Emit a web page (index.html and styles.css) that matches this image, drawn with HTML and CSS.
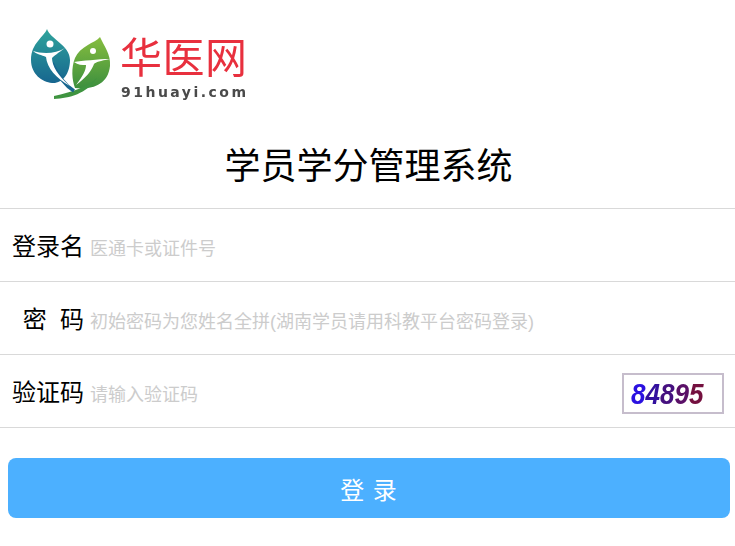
FILE: index.html
```html
<!DOCTYPE html>
<html lang="zh-CN">
<head>
    <meta charset="UTF-8">
    <meta name="viewport" content="width=device-width, initial-scale=1.0">
    <title>学员学分管理系统</title>
    <link rel="stylesheet" href="styles.css">
</head>
<body>
    <div class="logo">
        <svg width="280" height="110" viewBox="0 0 280 110">
            <defs>
                <linearGradient id="teal" x1="0" y1="0" x2="0" y2="1">
                    <stop offset="0" stop-color="#2fa49c"/>
                    <stop offset="1" stop-color="#17668f"/>
                </linearGradient>
                <linearGradient id="green" x1="0" y1="0" x2="0" y2="1">
                    <stop offset="0" stop-color="#86bd3f"/>
                    <stop offset="1" stop-color="#3c8f3e"/>
                </linearGradient>
            </defs>
            <path d="M47 19 C44 27 31 33 31 50 C31 64 42 72 52 73 C62 74 70 64 70 50 C70 35 50 29 47 19Z" fill="url(#teal)"/>
            <path d="M100 27 C95 33 80 36 75 48 C71 58 72 70 75 78 C90 80 108 76 110 56 C111 44 104 36 100 27Z" fill="url(#green)"/>
            <path d="M54 89 C70 88 86 84 97 68 C87 77 72 82 54 86Z" fill="#3f9440"/>
            <path d="M74 81 C66 76 59 68 52 53" fill="none" stroke="#17668f" stroke-width="3.5"/>
            <circle cx="50" cy="34" r="3.5" fill="#fff"/>
            <path d="M33 41 C42 44 56 44 65 38 C58 43 54 46 52 48 C52 56 58 66 70 76 C56 68 47 58 46 47 C42 45 36 44 33 41Z" fill="#fff"/>
            <circle cx="93" cy="41" r="3" fill="#fff"/>
            <path d="M74 52 C82 51 98 49 110 49 C100 51 96 52 94 54 C92 60 86 68 76 75 C83 66 86 60 86 55 C82 55 78 55 74 52Z" fill="#fff"/>
            <text class="logo-name" x="120" y="63" textLength="127">华医网</text>
            <text class="logo-site" x="121" y="87" textLength="125">91huayi.com</text>
        </svg>
    </div>

    <h1>学员学分管理系统</h1>

    <form class="login-form">
        <div class="row">
            <label for="username">登录名</label>
            <input type="text" id="username" placeholder="医通卡或证件号">
        </div>
        <div class="row">
            <label for="password">密  码</label>
            <input type="text" id="password" placeholder="初始密码为您姓名全拼(湖南学员请用科教平台密码登录)">
        </div>
        <div class="row">
            <label for="code">验证码</label>
            <input type="text" id="code" placeholder="请输入验证码">
            <div class="captcha">
                <span class="captcha-text"><span class="d1">8</span><span class="d2">4</span><span class="d3">8</span><span class="d4">9</span><span class="d5">5</span></span>
            </div>
        </div>
        <button type="button" class="login-btn">登 录</button>
    </form>
</body>
</html>
```

FILE: styles.css
```css
body {
    margin: 0;
    background-color: #fff;
    font-family: "Liberation Sans", "Noto Sans CJK SC", sans-serif;
    color: #000;
}
.logo {
    padding-top: 10px;
    height: 110px;
}
.logo svg {
    display: block;
    filter: blur(0.5px);
}
.logo-name {
    font-family: "Noto Sans CJK SC", sans-serif;
    font-size: 42px;
    fill: #e8303e;
}
.logo-site {
    font-family: "DejaVu Sans", sans-serif;
    font-size: 14px;
    font-weight: bold;
    fill: #4a4a4a;
}
h1 {
    margin: 0;
    height: 88px;
    padding-left: 2px;
    line-height: 94px;
    font-size: 36px;
    font-weight: normal;
    text-align: center;
}
.login-form {
    border-top: 1px solid #d9d9d9;
}
.row {
    display: flex;
    align-items: center;
    height: 72px;
    border-bottom: 1px solid #d9d9d9;
    padding: 0 11px 0 12px;
}
.row label {
    width: 72px;
    font-size: 24px;
    line-height: 30px;
    margin-top: 4px;
    text-align: right;
    white-space: pre;
    flex-shrink: 0;
}
.row input {
    flex: 1;
    min-width: 0;
    margin-left: 6px;
    padding: 8px 0 0;
    border: none;
    outline: none;
    font-family: inherit;
    font-size: 18px;
}
.row input::placeholder {
    color: #ccc;
    opacity: 1;
}
.captcha {
    box-sizing: border-box;
    width: 102px;
    height: 41px;
    margin-top: 4px;
    border: 2px solid #c6bdcc;
    padding-left: 7px;
    overflow: hidden;
    flex-shrink: 0;
}
.captcha-text {
    display: inline-block;
    transform: scaleX(0.87);
    transform-origin: left center;
    font-size: 30px;
    line-height: 38px;
    font-weight: bold;
    font-style: italic;
    white-space: nowrap;
    filter: blur(0.4px);
}
.d1 { color: #2a10e0; }
.d2 { color: #33109e; }
.d3 { color: #45107f; }
.d4 { color: #5a1067; }
.d5 { color: #74103f; }
.login-btn {
    display: block;
    width: 722px;
    height: 60px;
    margin: 30px 0 0 8px;
    border: none;
    border-radius: 8px;
    background-color: #4cb0ff;
    color: #fff;
    font-family: inherit;
    font-size: 24px;
    letter-spacing: 1px;
    cursor: pointer;
}
```
